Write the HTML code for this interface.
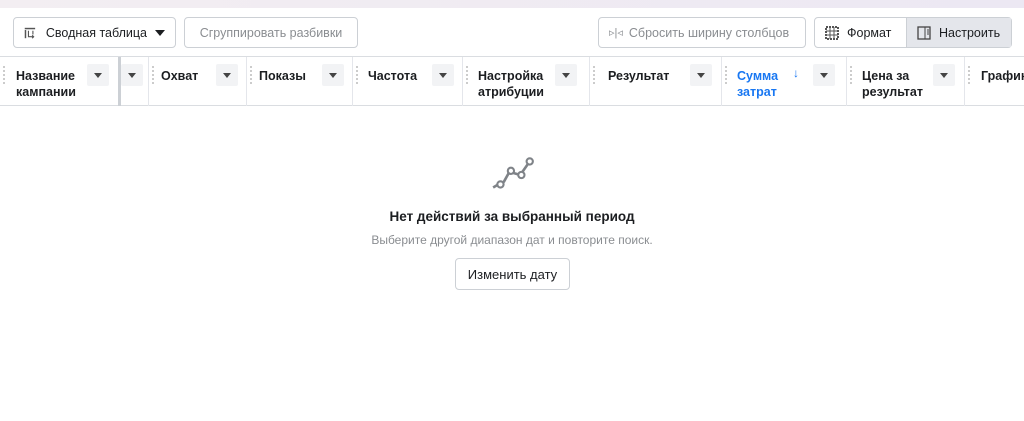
<!DOCTYPE html>
<html><head><meta charset="utf-8"><style>
*{box-sizing:border-box;margin:0;padding:0}
body{width:1024px;height:421px;overflow:hidden;background:#fff;font-family:"Liberation Sans","Noto Sans CJK SC",sans-serif;color:#1c1e21;position:relative}
.top{position:absolute;left:0;top:0;width:1024px;height:8px;background:linear-gradient(90deg,#f3eef2,#ece8f3)}
.btn{position:absolute;top:17px;height:31px;border:1px solid #ccd0d5;border-radius:4px;background:#fff;font-size:12.5px;display:flex;align-items:center;padding:0 10px;white-space:nowrap}
.hdr{position:absolute;top:56px;left:0;width:1024px;height:50px;border-top:1px solid #dadde1;border-bottom:1px solid #dadde1}
.col{position:absolute;top:0;height:49px;border-right:1px solid #e4e6eb}
.col .t{position:absolute;left:12px;top:11px;font-size:12.5px;font-weight:bold;line-height:16px}
.col .d{position:absolute;top:7px;width:22px;height:22px;background:#f2f3f5;border-radius:2px}
.col .d:after{content:"";position:absolute;left:7px;top:9px;border-left:4px solid transparent;border-right:4px solid transparent;border-top:5px solid #444}
.col .g{position:absolute;left:3px;top:9px;width:2px;height:20px;background:repeating-linear-gradient(#ccc 0 2px,transparent 2px 4px)}
</style></head><body>
<div class="top"></div>
<div class="btn" style="left:13px;width:163px">
<svg width="16" height="16" viewBox="0 0 16 16" style="margin-right:10px"><rect x="1" y="1" width="14" height="2" fill="#555"/><rect x="1" y="4" width="2" height="11" fill="#555"/><path d="M6 5v8h7M11 11l2 2-2 2M12 5v5" stroke="#555" stroke-width="1.5" fill="none"/></svg>Сводная таблица<span style="margin-left:8px;border-left:5px solid transparent;border-right:5px solid transparent;border-top:6px solid #1c1e21"></span></div>
<div class="btn" style="left:184px;width:174px;color:#8a8d91;justify-content:center">Сгруппировать разбивки</div>
<div class="btn" style="left:598px;width:208px;color:#8a8d91"><span style="font-size:11px;margin-right:6px">▹|◃</span>Сбросить ширину столбцов</div>
<div class="btn" style="left:814px;width:198px;padding:0"><div style="width:91px;height:100%;display:flex;align-items:center;padding-left:10px"><svg width="14" height="14" style="margin-right:8px"><rect x="1" y="1" width="12" height="12" fill="none" stroke="#555" stroke-width="2" stroke-dasharray="2 1"/><path d="M5 1v12M9 1v12M1 5h12M1 9h12" stroke="#555"/></svg>Формат</div><div style="flex:1;height:100%;background:#e4e6eb;display:flex;align-items:center;padding-left:10px;border-left:1px solid #ccd0d5"><svg width="14" height="14" style="margin-right:8px"><rect x="1" y="1" width="12" height="12" fill="none" stroke="#444" stroke-width="1.3"/><path d="M8 1v12M10 4h2M10 6h2M10 8h2" stroke="#444"/></svg>Настроить</div></div>
<div class="hdr">
<div class="col" style="left:0;width:121px;border-right:3px solid #ccd0d5"><div class="g"></div><div class="t" style="left:16px">Название<br>кампании</div><div class="d" style="left:87px"></div></div>
<div class="col" style="left:121px;width:28px"><div class="d" style="left:0"></div></div>
<div class="col" style="left:149px;width:98px"><div class="g"></div><div class="t">Охват</div><div class="d" style="left:67px"></div></div>
<div class="col" style="left:247px;width:106px"><div class="g"></div><div class="t">Показы</div><div class="d" style="left:75px"></div></div>
<div class="col" style="left:353px;width:110px"><div class="g"></div><div class="t" style="left:15px">Частота</div><div class="d" style="left:79px"></div></div>
<div class="col" style="left:463px;width:127px"><div class="g"></div><div class="t" style="left:15px">Настройка<br>атрибуции</div><div class="d" style="left:92px"></div></div>
<div class="col" style="left:590px;width:132px"><div class="g"></div><div class="t" style="left:18px">Результат</div><div class="d" style="left:100px"></div></div>
<div class="col" style="left:722px;width:125px"><div class="g"></div><div class="t" style="left:15px;color:#1877f2">Сумма<br>затрат</div><span style="position:absolute;left:71px;top:9px;color:#1877f2;font-size:12px">↓</span><div class="d" style="left:91px"></div></div>
<div class="col" style="left:847px;width:118px"><div class="g"></div><div class="t" style="left:15px">Цена за<br>результат</div><div class="d" style="left:86px"></div></div>
<div class="col" style="left:965px;width:70px;border:none"><div class="g"></div><div class="t" style="left:16px">График</div></div>
</div>
<svg style="position:absolute;left:490px;top:156px" width="46" height="38" viewBox="0 0 44 36"><path d="M3 30l5-3M13 25l5-9M22 16l7 2M31 15l7-10" stroke="#7f8388" stroke-width="2.5" fill="none"/><circle cx="10" cy="27" r="3" fill="#fff" stroke="#7f8388" stroke-width="2"/><circle cx="20" cy="14" r="3" fill="#fff" stroke="#7f8388" stroke-width="2"/><circle cx="30" cy="18" r="3" fill="#fff" stroke="#7f8388" stroke-width="2"/><circle cx="38" cy="5" r="3" fill="#fff" stroke="#7f8388" stroke-width="2"/></svg>
<div style="position:absolute;left:0;width:1024px;top:209px;text-align:center;font-weight:bold;font-size:13.5px">Нет действий за выбранный период</div>
<div style="position:absolute;left:0;width:1024px;top:233px;text-align:center;font-size:12px;color:#8a8d91">Выберите другой диапазон дат и повторите поиск.</div>
<div style="position:absolute;left:455px;top:258px;width:115px;height:32px;border:1px solid #ccd0d5;border-radius:4px;font-size:13px;display:flex;align-items:center;justify-content:center">Изменить дату</div>
</body></html>
